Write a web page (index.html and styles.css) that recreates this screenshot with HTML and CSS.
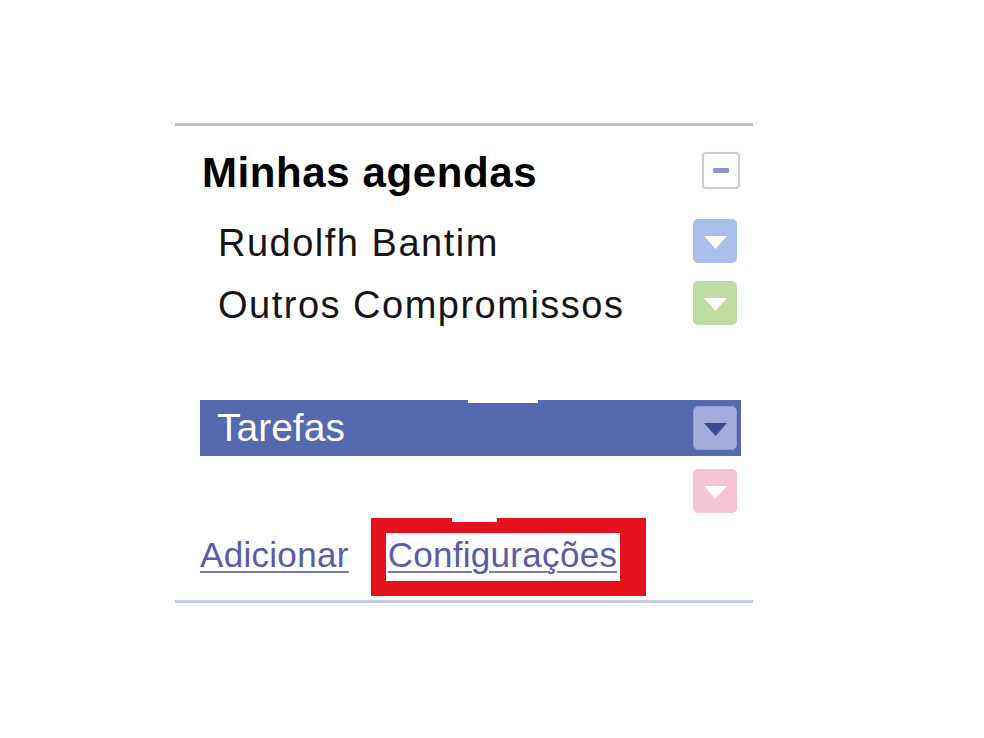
FILE: index.html
```html
<!DOCTYPE html>
<html lang="pt-BR">
<head>
<meta charset="utf-8">
<title>Minhas agendas</title>
<link rel="stylesheet" href="styles.css">
</head>
<body>
<div class="panel">
  <div class="header">
    <span class="title">Minhas agendas</span>
    <span class="minus"><span class="dash"></span></span>
  </div>
  <div class="row">
    <span class="name">Rudolfh Bantim</span>
    <span class="chip chip-blue"><svg class="tri" viewBox="0 0 23 13"><polygon points="0,0 23,0 11.5,13" fill="#fff"/></svg></span>
  </div>
  <div class="row">
    <span class="name">Outros Compromissos</span>
    <span class="chip chip-green"><svg class="tri" viewBox="0 0 23 13"><polygon points="0,0 23,0 11.5,13" fill="#fff"/></svg></span>
  </div>
  <div class="bar">
    <span class="bar-title">Tarefas</span>
    <span class="chip chip-bar"><svg class="tri" viewBox="0 0 23 13"><polygon points="0,0 23,0 11.5,13" fill="#3a4990"/></svg></span>
  </div>
  <div class="row-pink">
    <span class="chip chip-pink"><svg class="tri" viewBox="0 0 23 13"><polygon points="0,0 23,0 11.5,13" fill="#fff"/></svg></span>
  </div>
  <div class="links">
    <a class="link" href="#">Adicionar</a>
    <span class="redbox"><a class="link" href="#">Configurações</a></span>
  </div>
</div>
</body>
</html>
```
FILE: styles.css
```css
html, body {
  margin: 0;
  padding: 0;
  background: #ffffff;
}

body {
  font-family: "Liberation Sans", Arial, sans-serif;
  color: #111111;
  width: 984px;
  height: 738px;
  overflow: hidden;
}

.panel {
  margin-top: 123px;
  margin-left: 175px;
  width: 578px;
  box-sizing: border-box;
  border-top: 3px solid #b6bfe5;
  border-bottom: 3px solid #c5cde6;
  padding: 15px 12px 4px 25px;
}

.header {
  height: 59px;
  display: flex;
  align-items: center;
  justify-content: space-between;
}

.title {
  font-weight: bold;
  font-size: 42px;
  line-height: 48px;
  letter-spacing: 0.6px;
  color: #000000;
  padding-left: 2px;
  padding-top: 4px;
}

.minus {
  width: 38px;
  height: 37px;
  box-sizing: border-box;
  border: 2px solid #c8cce8;
  border-radius: 4px;
  margin-right: 1px;
  display: flex;
  align-items: center;
  justify-content: center;
  background: #ffffff;
}

.dash {
  width: 16px;
  height: 5px;
  background: #8c94cd;
  border-radius: 1px;
}

.row {
  height: 62px;
  display: flex;
  align-items: center;
  justify-content: space-between;
}

.header + .row {
  margin-top: 10px;
}

.name {
  font-size: 38px;
  line-height: 44px;
  letter-spacing: 1.5px;
  padding-left: 18px;
  padding-top: 4px;
  color: #151515;
}

.chip {
  width: 44px;
  height: 44px;
  border-radius: 5px;
  margin-right: 4px;
  display: flex;
  align-items: center;
  justify-content: center;
  box-sizing: border-box;
}

.tri {
  width: 23px;
  height: 13px;
  display: block;
  margin-top: 2px;
}

.chip-blue { background: #a9bee9; }
.chip-green { background: #c0dca3; }
.chip-pink { background: #f6c5d5; }
.chip-bar {
  background: #a3addb;
  border: 1px solid #8e99cf;
}

.bar {
  margin-top: 66px;
  height: 56px;
  background: #5569ae;
  display: flex;
  align-items: center;
  justify-content: space-between;
  position: relative;
}

.bar::before {
  content: "";
  position: absolute;
  left: 268px;
  top: 0;
  width: 70px;
  height: 3px;
  background: #ffffff;
}

.bar-title {
  color: #ffffff;
  font-size: 39px;
  line-height: 44px;
  padding-left: 17px;
}

.row-pink {
  margin-top: 14px;
  height: 42px;
  display: flex;
  justify-content: flex-end;
  align-items: center;
}

.links {
  margin-top: 6px;
  display: flex;
  align-items: baseline;
  font-size: 35px;
  line-height: 44px;
}

.link {
  font-size: 35px;
  line-height: 44px;
  letter-spacing: 0.3px;
  color: #5b5bab;
  text-decoration: underline;
  text-decoration-thickness: 2px;
  text-underline-offset: 4px;
  text-decoration-color: #7b7bc0;
}

.redbox {
  margin-left: 22px;
  border-style: solid;
  border-color: #e5121d;
  border-width: 15px 26px 15px 15px;
  padding: 0 3px 4px 2px;
  position: relative;
  display: block;
  font-size: 35px;
  line-height: 44px;
}

.redbox .link {
  display: block;
}

.redbox::before {
  content: "";
  position: absolute;
  left: 66px;
  top: -15px;
  width: 45px;
  height: 4px;
  background: #ffffff;
}
```
